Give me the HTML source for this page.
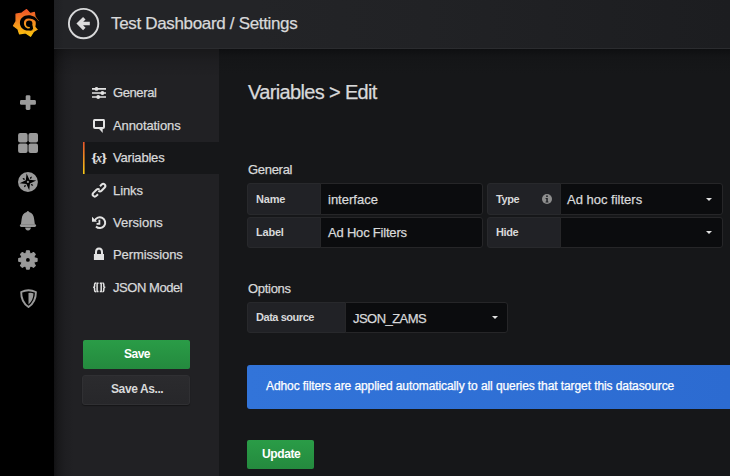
<!DOCTYPE html>
<html><head><meta charset="utf-8">
<style>
*{box-sizing:border-box;margin:0;padding:0}
html,body{width:730px;height:476px;overflow:hidden;background:#161719;font-family:"Liberation Sans",sans-serif;color:#d8d9da}
.abs{position:absolute}
#side{left:0;top:0;width:54px;height:476px;background:#000}
#hdr{left:54px;top:0;width:676px;height:48px;background:linear-gradient(90deg,#1f2023 0,#232427 10px,#232427 30%,#212225 55%,#1c1d20 100%)}
#hdrb{left:54px;top:48px;width:676px;height:1px;background:#2b2c2f}
#nav{left:54px;top:49px;width:165px;height:427px;background:linear-gradient(rgba(0,0,0,.28),rgba(0,0,0,.1) 12px,rgba(0,0,0,0) 28px),linear-gradient(90deg,#121214 0,#19191b 4px,#1e1e21 11px,#212124 20px,#212124 100%)}
#main{left:219px;top:49px;width:511px;height:427px;background:linear-gradient(#0e0f11 0,#141517 8px,#161719 24px)}
.t{position:absolute;white-space:nowrap;line-height:1;-webkit-text-stroke:0.25px currentColor}
.menu{font-size:13px;color:#d8d9da;letter-spacing:-0.1px}
.sel{left:83px;top:142px;width:136px;height:32px;background:#161719}
.selb{left:83px;top:142px;width:1.5px;height:32px;background:linear-gradient(#e8542a,#f5c518)}
.btn{position:absolute;font-weight:bold;font-size:12px;color:#fff;border-radius:2px}
.box{position:absolute;border-radius:3px}
.lab{background:#212226;border:1px solid #28292c;border-radius:3px 0 0 3px}
.inp{background:#0b0c0e;border:1px solid #262628;border-radius:0 3px 3px 0}
.lt{position:absolute;white-space:nowrap;line-height:1;font-weight:bold;font-size:11px;color:#d8d9da;letter-spacing:-0.2px}
.it{position:absolute;white-space:nowrap;line-height:1;font-size:13px;color:#d8d9da;-webkit-text-stroke:0.25px currentColor}
.caret{position:absolute;width:0;height:0;border-left:3.5px solid transparent;border-right:3.5px solid transparent;border-top:3.5px solid #e0e0e0}
.ic{position:absolute}
</style></head><body>
<div id="side" class="abs"></div>
<div id="hdr" class="abs"></div>
<div id="hdrb" class="abs"></div>
<div id="nav" class="abs"></div>
<div id="main" class="abs"></div>

<!-- logo -->
<svg class="ic" style="left:0;top:0" width="54" height="48" viewBox="0 0 54 48">
<defs><linearGradient id="lg" x1="0" y1="9" x2="0" y2="37" gradientUnits="userSpaceOnUse"><stop offset="0" stop-color="#ef5128"/><stop offset="0.5" stop-color="#f68f1f"/><stop offset="1" stop-color="#fbc80c"/></linearGradient></defs>
<path fill="url(#lg)" stroke="url(#lg)" stroke-width="1.2" stroke-linejoin="round" d="M26.6 9.6 L30 13.5 L34.4 12.4 L35 16.7 L38.3 21.3 L37.3 29.3 L33.6 31.4 L30.6 36.3 L25.4 32.8 L19.5 33.9 L17.9 28.9 L13.5 25.8 L16.1 21.4 L16 14.2 L21.8 13.1 Z"/>
<path fill="#000" d="M32.5 30.3 C30.5 30.9 29.5 30.6 28.5 30.6 C23 30.6 19.9 27 19.9 23 C19.9 18.5 23.5 15.3 28.5 15.3 C33 15.3 36.5 17.5 38.6 21.6 L35.7 21.6 C34.5 19.5 31.5 18.5 28.5 18.5 C25.5 18.5 23.9 20.5 23.9 23 C23.9 26 26 28.5 28.5 28.5 C29.8 28.5 30.8 28.3 31.5 27.8 Z"/>
<path fill="#000" d="M35.7 21 L40 21 L40 29 L37.5 29.2 L35.4 26.8 Q36 24 35.7 21Z"/>
<circle cx="29.2" cy="23.7" r="3.2" fill="#000"/>
<path fill="#000" d="M29.8 26 L32.6 25.2 L33.2 29.6 L29.8 29Z"/>
</svg>

<!-- sidebar icons -->
<svg class="ic" style="left:14px;top:88px" width="28" height="28" viewBox="0 0 28 28"><g fill="#9a9a9a"><rect x="11.7" y="7.2" width="4.7" height="14.7" rx="1.3"/><rect x="6" y="12.1" width="15.9" height="4.7" rx="1.3"/></g></svg>
<svg class="ic" style="left:14px;top:126px" width="28" height="34" viewBox="0 0 28 34">
<rect x="4.1" y="7" width="9.5" height="9.5" rx="2" fill="#9a9a9a"/><rect x="14.5" y="7" width="9.5" height="9.5" rx="2" fill="#9a9a9a"/>
<rect x="4.1" y="17.5" width="9.5" height="9.5" rx="2" fill="#9a9a9a"/><rect x="14.5" y="17.5" width="9.5" height="9.5" rx="2" fill="#9a9a9a"/></svg>
<svg class="ic" style="left:14px;top:168px" width="28" height="28" viewBox="0 0 28 28">
<circle cx="13.95" cy="13.95" r="9.95" fill="#9a9a9a"/>
<path d="M12.59 5.60 L15.43 11.80 L22.20 12.59 L16.00 15.43 L15.21 22.20 L12.37 16.00 L5.60 15.21 L11.80 12.37Z" fill="#000"/>
<path d="M16.02 10.99 L17.53 10.35 L17.78 8.56 L16.15 9.36Z M16.81 16.02 L17.45 17.53 L19.24 17.78 L18.44 16.15Z M11.78 16.81 L10.27 17.45 L10.02 19.24 L11.65 18.44Z M10.99 11.78 L10.35 10.27 L8.56 10.02 L9.36 11.65Z" fill="#000"/>
<circle cx="13.9" cy="13.9" r="1.1" fill="#8a8a8a"/>
</svg>
<svg class="ic" style="left:14px;top:204px" width="28" height="32" viewBox="0 0 28 32">
<path d="M13.9 6.9C14.5 6.9 14.8 7.5 15.1 8.1C18.2 8.9 19.9 11.5 20.2 15.5L20.9 20.5H6.9L7.6 15.5C7.9 11.5 9.6 8.9 12.7 8.1C13 7.5 13.3 6.9 13.9 6.9Z" fill="#9a9a9a"/>
<rect x="5.9" y="20.3" width="16.2" height="2.6" rx="1.3" fill="#9a9a9a"/>
<path d="M11.2 23.6 A2.8 2.8 0 0 0 16.8 23.6Z" fill="#9a9a9a"/>
</svg>
<svg class="ic" style="left:14px;top:244px" width="28" height="32" viewBox="0 0 28 32">
<circle cx="13.9" cy="15.9" r="6.9" fill="#9a9a9a"/>
<path d="M11.60 10.40 L12.60 6.70 L15.20 6.70 L16.20 10.40Z M16.16 10.38 L19.49 8.48 L21.32 10.31 L19.42 13.64Z M19.40 13.60 L23.10 14.60 L23.10 17.20 L19.40 18.20Z M19.42 18.16 L21.32 21.49 L19.49 23.32 L16.16 21.42Z M16.20 21.40 L15.20 25.10 L12.60 25.10 L11.60 21.40Z M11.64 21.42 L8.31 23.32 L6.48 21.49 L8.38 18.16Z M8.40 18.20 L4.70 17.20 L4.70 14.60 L8.40 13.60Z M8.38 13.64 L6.48 10.31 L8.31 8.48 L11.64 10.38Z" fill="#9a9a9a" stroke="#9a9a9a" stroke-width="1.1" stroke-linejoin="round"/>
<circle cx="13.9" cy="15.9" r="1.9" fill="#000"/>
</svg>
<svg class="ic" style="left:14px;top:282px" width="28" height="32" viewBox="0 0 28 32">
<path d="M7.2 10 Q14.5 6.6 21.9 10 Q22 20 14.5 25 Q7 20 7.2 10Z" fill="none" stroke="#9a9a9a" stroke-width="1.9" stroke-linejoin="round"/>
<path d="M14.5 11 Q17.5 10.5 19.5 11.5 Q19.2 18.5 14.5 22.5Z" fill="#9a9a9a"/>
</svg>

<!-- header -->
<svg class="ic" style="left:66px;top:6px" width="36" height="36" viewBox="0 0 36 36">
<circle cx="17.6" cy="17.6" r="14.7" fill="none" stroke="#d8d9da" stroke-width="1.9"/>
<path d="M18.3 12.2L12.9 17.6 18.3 23M14 17.6H23.8" fill="none" stroke="#dcdcdc" stroke-width="3.5" stroke-linejoin="miter" stroke-linecap="butt"/>
</svg>
<div class="t" style="left:111px;top:15px;font-size:17px;letter-spacing:-0.33px;color:#d8d9da">Test Dashboard / Settings</div>

<!-- nav -->
<div class="abs sel"></div>
<svg class="ic" style="left:83px;top:142px" width="3" height="32" viewBox="0 0 3 32"><defs><linearGradient id="sg" x1="0" y1="0" x2="0" y2="1"><stop offset="0" stop-color="#e8542a"/><stop offset="1" stop-color="#f7c917"/></linearGradient></defs><rect x="0" y="0" width="1.6" height="32" fill="url(#sg)"/></svg>
<svg class="ic" style="left:88px;top:84px" width="22" height="18" viewBox="0 0 22 18">
<g stroke="#e3e3e3" stroke-width="1.7"><path d="M4 4.9H18M4 9H18M4 13H18"/></g>
<g fill="#e3e3e3"><circle cx="8.5" cy="4.9" r="1.9"/><circle cx="14.4" cy="9" r="1.9"/><circle cx="10.2" cy="13" r="1.9"/></g>
</svg>
<svg class="ic" style="left:88px;top:116px" width="22" height="20" viewBox="0 0 22 20">
<path d="M6.5 3.9H15.9Q16 3.9 16 5V11Q16 12 15 12H7Q6 12 6 11V5Q6 3.9 6.5 3.9Z" fill="none" stroke="#e3e3e3" stroke-width="2"/>
<path d="M10.7 12.5L14.7 17 14.7 12.5Z" fill="#e3e3e3"/>
</svg>
<div class="t" style="left:91.5px;top:151px;font-family:'Liberation Serif',serif;font-weight:bold;font-size:13.5px;color:#e6e6e6">{</div>
<div class="t" style="left:96px;top:151px;font-family:'Liberation Serif',serif;font-style:italic;font-size:13px;color:#e6e6e6">x</div>
<div class="t" style="left:101.5px;top:151px;font-family:'Liberation Serif',serif;font-weight:bold;font-size:13.5px;color:#e6e6e6">}</div>
<svg class="ic" style="left:88px;top:180px" width="22" height="20" viewBox="0 0 22 20">
<g fill="none" stroke="#e3e3e3" stroke-width="2">
<path d="M12 6.2L13.7 4.5Q15.2 3 16.7 4.5Q18.2 6 16.7 7.5L13.5 10.7Q12 12.2 10.5 10.7"/>
<path d="M10 14.2L8.3 15.9Q6.8 17.4 5.3 15.9Q3.8 14.4 5.3 12.9L8.5 9.7Q10 8.2 11.5 9.7"/>
</g></svg>
<svg class="ic" style="left:88px;top:213px" width="22" height="20" viewBox="0 0 22 20">
<path d="M6.7 7.85 A5.4 5.4 0 1 1 8 13.5" fill="none" stroke="#e3e3e3" stroke-width="2"/>
<path d="M4 3.8V8.8H9Z" fill="#e3e3e3"/>
<path d="M11.4 6.8V10.9H8.6" fill="none" stroke="#e3e3e3" stroke-width="1.8"/>
</svg>
<svg class="ic" style="left:88px;top:245px" width="22" height="20" viewBox="0 0 22 20">
<path d="M8 9.5V7Q8 3.4 11 3.4Q14 3.4 14 7V9.5" fill="none" stroke="#e3e3e3" stroke-width="2"/>
<rect x="5.9" y="9" width="10.1" height="6" fill="#e3e3e3"/>
</svg>
<svg class="ic" style="left:88px;top:277px" width="22" height="20" viewBox="0 0 22 20"><g fill="none" stroke="#e3e3e3" stroke-width="1.5">
<path d="M8 5.9Q6.6 5.9 6.6 7.4V9.4Q6.6 10.3 5.1 10.3Q6.6 10.3 6.6 11.2V13.2Q6.6 14.7 8 14.7"/>
<path d="M10.5 6.2H9.1V14.4H10.5"/><path d="M11.8 6.2H13.2V14.4H11.8"/>
<path d="M14.4 5.9Q15.8 5.9 15.8 7.4V9.4Q15.8 10.3 17.3 10.3Q15.8 10.3 15.8 11.2V13.2Q15.8 14.7 14.4 14.7"/>
</g></svg>

<div class="t menu" style="left:113px;top:86px;letter-spacing:-0.4px">General</div>
<div class="t menu" style="left:113px;top:119px;letter-spacing:-0.1px">Annotations</div>
<div class="t menu" style="left:113px;top:151px;letter-spacing:-0.2px">Variables</div>
<div class="t menu" style="left:113px;top:184px;letter-spacing:-0.1px">Links</div>
<div class="t menu" style="left:113px;top:216px;letter-spacing:0px">Versions</div>
<div class="t menu" style="left:113px;top:248px;letter-spacing:-0.1px">Permissions</div>
<div class="t menu" style="left:113px;top:281px;letter-spacing:-0.45px">JSON Model</div>

<div class="btn abs" style="left:83px;top:340px;width:107px;height:29px;background:linear-gradient(#2a9c47,#248a3e)"></div>
<div class="t" style="left:124px;top:348px;font-size:12px;font-weight:bold;color:#fff;letter-spacing:-0.5px;-webkit-text-stroke:0">Save</div>
<div class="btn abs" style="left:82px;top:375px;width:108px;height:30px;background:linear-gradient(#2b2b2e,#27272a);border:1px solid #303033;border-radius:3px;box-shadow:0 1px 1px rgba(0,0,0,.35)"></div>
<div class="t" style="left:111px;top:383px;font-size:12px;font-weight:bold;color:#d8d9da;letter-spacing:-0.4px;-webkit-text-stroke:0">Save As...</div>

<!-- main -->
<div class="t" style="left:248px;top:82px;font-size:20px;letter-spacing:-0.65px">Variables &gt; Edit</div>
<div class="t" style="left:248px;top:163px;font-size:13px;letter-spacing:-0.3px">General</div>

<div class="box lab" style="left:247px;top:183px;width:74px;height:32px"></div>
<div class="box inp" style="left:320px;top:183px;width:163px;height:32px"></div>
<div class="box lab" style="left:247px;top:217px;width:74px;height:31px"></div>
<div class="box inp" style="left:320px;top:217px;width:163px;height:31px"></div>
<div class="lt" style="left:256px;top:194px">Name</div>
<div class="it" style="left:328px;top:193px">interface</div>
<div class="lt" style="left:256px;top:227px">Label</div>
<div class="it" style="left:328px;top:226px;letter-spacing:-0.2px">Ad Hoc Filters</div>

<div class="box lab" style="left:487px;top:183px;width:74px;height:32px"></div>
<div class="box inp" style="left:560px;top:183px;width:163px;height:32px"></div>
<div class="box lab" style="left:487px;top:217px;width:74px;height:31px"></div>
<div class="box inp" style="left:560px;top:217px;width:163px;height:31px"></div>
<div class="lt" style="left:496px;top:194px;letter-spacing:-0.4px">Type</div>
<svg class="ic" style="left:541px;top:193px" width="12" height="12" viewBox="0 0 12 12"><circle cx="6" cy="6" r="5" fill="#8e8e8e"/><path d="M6 2.3a0.9 0.9 0 1 1 0 1.8a0.9 0.9 0 1 1 0-1.8M4.6 5H6.8V8.4H7.4V9.5H4.6V8.4H5.3V6H4.6Z" fill="#202226"/></svg>
<div class="it" style="left:567px;top:193px">Ad hoc filters</div>
<div class="lt" style="left:496px;top:227px;letter-spacing:-0.4px">Hide</div>
<div class="caret" style="left:706px;top:198px"></div>
<div class="caret" style="left:706px;top:231px"></div>

<div class="t" style="left:248px;top:282px;font-size:13px;letter-spacing:-0.3px">Options</div>
<div class="box lab" style="left:247px;top:302px;width:99px;height:31px"></div>
<div class="box inp" style="left:345px;top:302px;width:163px;height:31px"></div>
<div class="lt" style="left:256px;top:312px;letter-spacing:-0.45px">Data source</div>
<div class="it" style="left:353px;top:312px;letter-spacing:-0.55px">JSON_ZAMS</div>
<div class="caret" style="left:492px;top:316px"></div>

<div class="abs" style="left:247px;top:365px;width:483px;height:44px;background:linear-gradient(90deg,#3274d9,#2c6bd1);border-radius:3px 0 0 3px"></div>
<div class="t" style="left:266px;top:380px;font-size:12px;color:#fff;letter-spacing:-0.09px">Adhoc filters are applied automatically to all queries that target this datasource</div>

<div class="btn abs" style="left:247px;top:440px;width:67px;height:29px;background:linear-gradient(#2a9c47,#248a3e)"></div>
<div class="t" style="left:262px;top:448px;font-size:12px;font-weight:bold;color:#fff;letter-spacing:-0.4px;-webkit-text-stroke:0">Update</div>
</body></html>
